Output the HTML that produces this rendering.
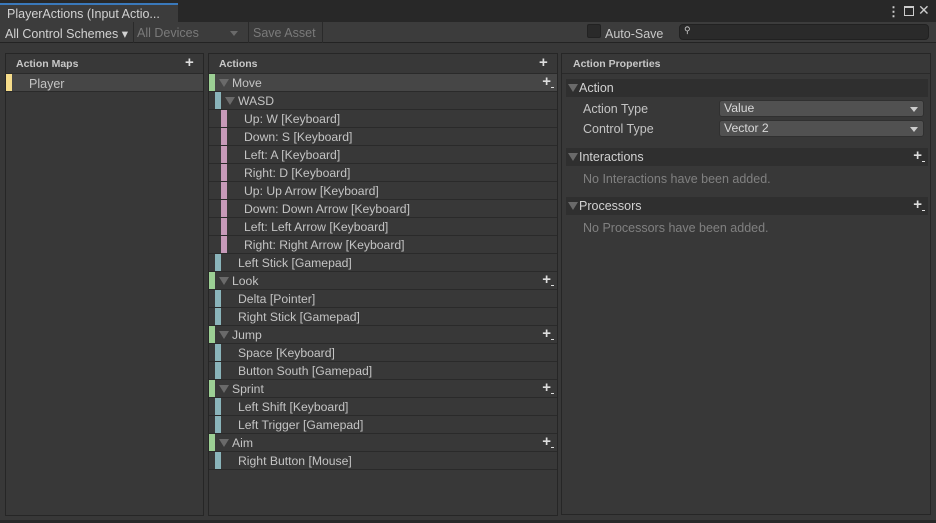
<!DOCTYPE html><html><head><style>
*{margin:0;padding:0;box-sizing:border-box}
body{width:936px;height:523px;background:#383838;font-family:"Liberation Sans",sans-serif;font-size:12.2px;color:#c4c4c4;position:relative;overflow:hidden}
.a{position:absolute}
.row{position:absolute;left:209px;width:348px;height:18px;border-bottom:1px solid #2a2a2a;line-height:19px;white-space:nowrap}
.bar{position:absolute;top:0;width:6px;height:17px}
.g{background:#9ccf94}.b{background:#8ab4ba}.p{background:#c79ab9}
.tri{position:absolute;top:5px;width:0;height:0;border-left:5px solid transparent;border-right:5px solid transparent;border-top:8px solid #6a6a6a}
.plus{position:absolute;right:6px;top:0;color:#ddd;font-size:15px;font-weight:bold;line-height:16px}
.plus:after{content:"";position:absolute;right:-3px;bottom:2px;width:3px;height:1px;background:#ddd}
.sec{position:absolute;left:566px;width:362px;height:18px;background:#2f2f2f;line-height:19px;font-size:12.5px;color:#d2d2d2}
.dd{position:absolute;left:719px;width:205px;height:17px;background:#515151;border:1px solid #303030;border-radius:3px;line-height:15px;padding-left:4px;color:#d8d8d8}
.dd:after{content:"";position:absolute;right:5px;top:6px;border-left:4px solid transparent;border-right:4px solid transparent;border-top:5px solid #ccc}
</style></head><body>
<div class="a" style="left:0;top:0;width:936px;height:22px;background:#282828"></div>
<div class="a" style="left:0;top:3px;width:178px;height:19px;background:#3c3c3c;border-top:2px solid #3a79bb;padding-left:7px;line-height:19px;color:#d2d2d2;font-size:12.5px">PlayerActions (Input Actio...</div>
<div class="a" style="left:887px;top:4px;color:#ccc;font-size:13px;font-weight:bold">⋮</div>
<div class="a" style="left:904px;top:6px;width:10px;height:10px;border:1px solid #ccc;border-top-width:2px"></div>
<div class="a" style="left:918px;top:2px;color:#ccc;font-size:14px">✕</div>
<div class="a" style="left:0;top:22px;width:936px;height:21px;background:#3c3c3c;border-bottom:1px solid #232323"></div>
<div class="a" style="left:5px;top:26px;color:#d2d2d2;font-size:12.5px">All Control Schemes ▾</div>
<div class="a" style="left:133px;top:22px;width:1px;height:21px;background:#2a2a2a"></div>
<div class="a" style="left:137px;top:26px;color:#7a7a7a;font-size:12.5px">All Devices</div>
<div class="a" style="left:230px;top:31px;border-left:4px solid transparent;border-right:4px solid transparent;border-top:5px solid #6a6a6a"></div>
<div class="a" style="left:248px;top:22px;width:1px;height:21px;background:#2a2a2a"></div>
<div class="a" style="left:253px;top:26px;color:#7a7a7a;font-size:12.5px">Save Asset</div>
<div class="a" style="left:322px;top:22px;width:1px;height:21px;background:#2a2a2a"></div>
<div class="a" style="left:587px;top:24px;width:14px;height:14px;background:#2a2a2a;border:1px solid #222;border-radius:2px"></div>
<div class="a" style="left:605px;top:27px;color:#c8c8c8;font-size:12.5px">Auto-Save</div>
<div class="a" style="left:679px;top:24px;width:250px;height:16px;background:#2a2a2a;border:1px solid #212121;border-radius:4px"><span style="position:absolute;left:4px;top:0;font-size:9px;color:#ccc">&#x26B2;</span></div>
<div class="a" style="left:5px;top:53px;width:199px;height:463px;border:1px solid #262626"></div>
<div class="a" style="left:6px;top:54px;width:197px;height:20px;border-bottom:1px solid #2a2a2a;padding-left:10px;line-height:21px;font-size:10.5px;font-weight:bold;color:#c8c8c8">Action Maps</div>
<div class="a" style="left:185px;top:54px;color:#ddd;font-size:15px;font-weight:bold">+</div>
<div class="a" style="left:6px;top:74px;width:197px;height:18px;background:#464646;border-bottom:1px solid #2a2a2a"><div class="bar" style="left:0;background:#f5dc8a"></div><span style="position:absolute;left:23px;top:3px;font-size:12.5px">Player</span></div>
<div class="a" style="left:208px;top:53px;width:350px;height:463px;border:1px solid #262626"></div>
<div class="a" style="left:209px;top:54px;width:348px;height:20px;border-bottom:1px solid #2a2a2a;padding-left:10px;line-height:21px;font-size:10.5px;font-weight:bold;color:#c8c8c8">Actions</div>
<div class="a" style="left:539px;top:54px;color:#ddd;font-size:15px;font-weight:bold">+</div>
<div class="a" style="left:561px;top:53px;width:370px;height:462px;border:1px solid #262626"></div>
<div class="a" style="left:562px;top:54px;width:368px;height:20px;border-bottom:1px solid #2a2a2a;padding-left:11px;line-height:21px;font-size:10.5px;font-weight:bold;color:#c8c8c8">Action Properties</div>
<div class="a" style="left:0;top:520px;width:936px;height:3px;background:#282828"></div>

<div class="row" style="top:74px;background:#464646"><div class="bar g" style="left:0"></div><div class="tri" style="left:10px"></div><span class="a" style="left:23px">Move</span><span class="plus">+</span></div>
<div class="row" style="top:92px"><div class="bar b" style="left:6px"></div><div class="tri" style="left:16px"></div><span class="a" style="left:29px">WASD</span></div>
<div class="row" style="top:110px"><div class="bar p" style="left:12px"></div><span class="a" style="left:35px">Up: W [Keyboard]</span></div>
<div class="row" style="top:128px"><div class="bar p" style="left:12px"></div><span class="a" style="left:35px">Down: S [Keyboard]</span></div>
<div class="row" style="top:146px"><div class="bar p" style="left:12px"></div><span class="a" style="left:35px">Left: A [Keyboard]</span></div>
<div class="row" style="top:164px"><div class="bar p" style="left:12px"></div><span class="a" style="left:35px">Right: D [Keyboard]</span></div>
<div class="row" style="top:182px"><div class="bar p" style="left:12px"></div><span class="a" style="left:35px">Up: Up Arrow [Keyboard]</span></div>
<div class="row" style="top:200px"><div class="bar p" style="left:12px"></div><span class="a" style="left:35px">Down: Down Arrow [Keyboard]</span></div>
<div class="row" style="top:218px"><div class="bar p" style="left:12px"></div><span class="a" style="left:35px">Left: Left Arrow [Keyboard]</span></div>
<div class="row" style="top:236px"><div class="bar p" style="left:12px"></div><span class="a" style="left:35px">Right: Right Arrow [Keyboard]</span></div>
<div class="row" style="top:254px"><div class="bar b" style="left:6px"></div><span class="a" style="left:29px">Left Stick [Gamepad]</span></div>
<div class="row" style="top:272px"><div class="bar g" style="left:0"></div><div class="tri" style="left:10px"></div><span class="a" style="left:23px">Look</span><span class="plus">+</span></div>
<div class="row" style="top:290px"><div class="bar b" style="left:6px"></div><span class="a" style="left:29px">Delta [Pointer]</span></div>
<div class="row" style="top:308px"><div class="bar b" style="left:6px"></div><span class="a" style="left:29px">Right Stick [Gamepad]</span></div>
<div class="row" style="top:326px"><div class="bar g" style="left:0"></div><div class="tri" style="left:10px"></div><span class="a" style="left:23px">Jump</span><span class="plus">+</span></div>
<div class="row" style="top:344px"><div class="bar b" style="left:6px"></div><span class="a" style="left:29px">Space [Keyboard]</span></div>
<div class="row" style="top:362px"><div class="bar b" style="left:6px"></div><span class="a" style="left:29px">Button South [Gamepad]</span></div>
<div class="row" style="top:380px"><div class="bar g" style="left:0"></div><div class="tri" style="left:10px"></div><span class="a" style="left:23px">Sprint</span><span class="plus">+</span></div>
<div class="row" style="top:398px"><div class="bar b" style="left:6px"></div><span class="a" style="left:29px">Left Shift [Keyboard]</span></div>
<div class="row" style="top:416px"><div class="bar b" style="left:6px"></div><span class="a" style="left:29px">Left Trigger [Gamepad]</span></div>
<div class="row" style="top:434px"><div class="bar g" style="left:0"></div><div class="tri" style="left:10px"></div><span class="a" style="left:23px">Aim</span><span class="plus">+</span></div>
<div class="row" style="top:452px"><div class="bar b" style="left:6px"></div><span class="a" style="left:29px">Right Button [Mouse]</span></div>

<div class="sec" style="top:79px"><div class="tri" style="left:2px;top:5px"></div><span class="a" style="left:13px">Action</span></div>
<div class="a" style="left:583px;top:102px;font-size:12.5px">Action Type</div>
<div class="dd" style="top:100px">Value</div>
<div class="a" style="left:583px;top:122px;font-size:12.5px">Control Type</div>
<div class="dd" style="top:120px">Vector 2</div>
<div class="sec" style="top:148px"><div class="tri" style="left:2px;top:5px"></div><span class="a" style="left:13px">Interactions</span><span class="plus" style="right:6px">+</span></div>
<div class="a" style="left:583px;top:172px;color:#808080;font-size:12.5px">No Interactions have been added.</div>
<div class="sec" style="top:197px"><div class="tri" style="left:2px;top:5px"></div><span class="a" style="left:13px">Processors</span><span class="plus" style="right:6px">+</span></div>
<div class="a" style="left:583px;top:221px;color:#808080;font-size:12.5px">No Processors have been added.</div>
</body></html>
